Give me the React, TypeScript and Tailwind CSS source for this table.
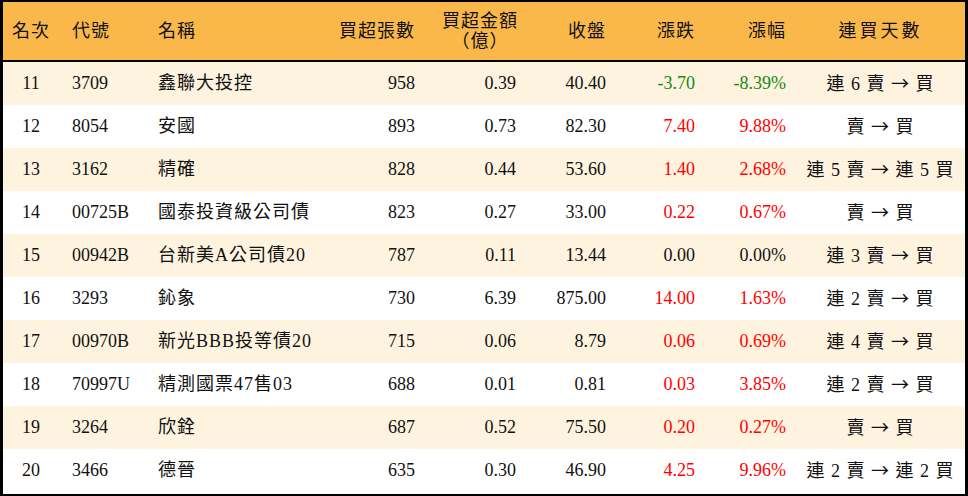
const rows = [
  { rank: 11, code: '3709', name: '鑫聯大投控', vol: '958', amt: '0.39', close: '40.40', chg: '-3.70', pct: '-8.39%', streak: '連 6 賣 → 買' },
  { rank: 12, code: '8054', name: '安國', vol: '893', amt: '0.73', close: '82.30', chg: '7.40', pct: '9.88%', streak: '賣 → 買' },
  { rank: 13, code: '3162', name: '精確', vol: '828', amt: '0.44', close: '53.60', chg: '1.40', pct: '2.68%', streak: '連 5 賣 → 連 5 買' },
  { rank: 14, code: '00725B', name: '國泰投資級公司債', vol: '823', amt: '0.27', close: '33.00', chg: '0.22', pct: '0.67%', streak: '賣 → 買' },
  { rank: 15, code: '00942B', name: '台新美A公司債20', vol: '787', amt: '0.11', close: '13.44', chg: '0.00', pct: '0.00%', streak: '連 3 賣 → 買' },
  { rank: 16, code: '3293', name: '鈊象', vol: '730', amt: '6.39', close: '875.00', chg: '14.00', pct: '1.63%', streak: '連 2 賣 → 買' },
  { rank: 17, code: '00970B', name: '新光BBB投等債20', vol: '715', amt: '0.06', close: '8.79', chg: '0.06', pct: '0.69%', streak: '連 4 賣 → 買' },
  { rank: 18, code: '70997U', name: '精測國票47售03', vol: '688', amt: '0.01', close: '0.81', chg: '0.03', pct: '3.85%', streak: '連 2 賣 → 買' },
  { rank: 19, code: '3264', name: '欣銓', vol: '687', amt: '0.52', close: '75.50', chg: '0.20', pct: '0.27%', streak: '賣 → 買' },
  { rank: 20, code: '3466', name: '德晉', vol: '635', amt: '0.30', close: '46.90', chg: '4.25', pct: '9.96%', streak: '連 2 賣 → 連 2 買' },
];

const cols = 'grid grid-cols-[56px_87px_154px_125px_101px_90px_89px_91px_1fr] items-center';

function tone(v: string) {
  if (v.startsWith('-')) return 'text-[#148a14]';
  if (/^0\.00/.test(v)) return 'text-[#111]';
  return 'text-[#ff0000]';
}

// split streak text so the arrow uses the CJK font (long, centred arrow)
function Streak({ text }: { text: string }) {
  const [from, to] = text.split(' → ');
  return (
    <div className="whitespace-pre text-center tracking-[1px]">
      {from}{' '}
      <span style={{ fontFamily: '"Noto Sans CJK TC", sans-serif' }}>→</span>
      {' '}{to}
    </div>
  );
}

export default function App() {
  return (
    <div
      className="h-[496px] w-[968px] overflow-hidden bg-white text-[18px] text-[#111]"
      style={{ fontFamily: '"Liberation Serif", "Noto Sans CJK TC", serif' }}
    >
      <div className="h-full border-x-[3px] border-t-2 border-b-2 border-black">
        <div className={`${cols} h-[60px] border-b-2 border-black bg-[#fab84b] tracking-[1px]`}>
          <div className="text-center">名次</div>
          <div className="pl-[13px]">代號</div>
          <div className="pl-[12px]">名稱</div>
          <div className="pr-[10px] text-right">買超張數</div>
          <div className="flex justify-end pr-[8px]">
            <div className="text-center leading-[20px]">
              <div>買超金額</div>
              <div>（億）</div>
            </div>
          </div>
          <div className="pr-[10px] text-right">收盤</div>
          <div className="pr-[10px] text-right">漲跌</div>
          <div className="pr-[10px] text-right">漲幅</div>
          <div className="text-center tracking-[3px]">連買天數</div>
        </div>
        {rows.map((r, i) => (
          <div key={r.rank} className={`${cols} h-[43px] ${i % 2 === 0 ? 'bg-[#fef3df]' : 'bg-white'}`}>
            <div className="text-center">{r.rank}</div>
            <div className="pl-[13px]">{r.code}</div>
            <div className="whitespace-nowrap pl-[12px] tracking-[1px]">{r.name}</div>
            <div className="pr-[10px] text-right">{r.vol}</div>
            <div className="pr-[10px] text-right">{r.amt}</div>
            <div className="pr-[10px] text-right">{r.close}</div>
            <div className={`pr-[10px] text-right ${tone(r.chg)}`}>{r.chg}</div>
            <div className={`pr-[10px] text-right ${tone(r.pct)}`}>{r.pct}</div>
            <Streak text={r.streak} />
          </div>
        ))}
      </div>
    </div>
  );
}
